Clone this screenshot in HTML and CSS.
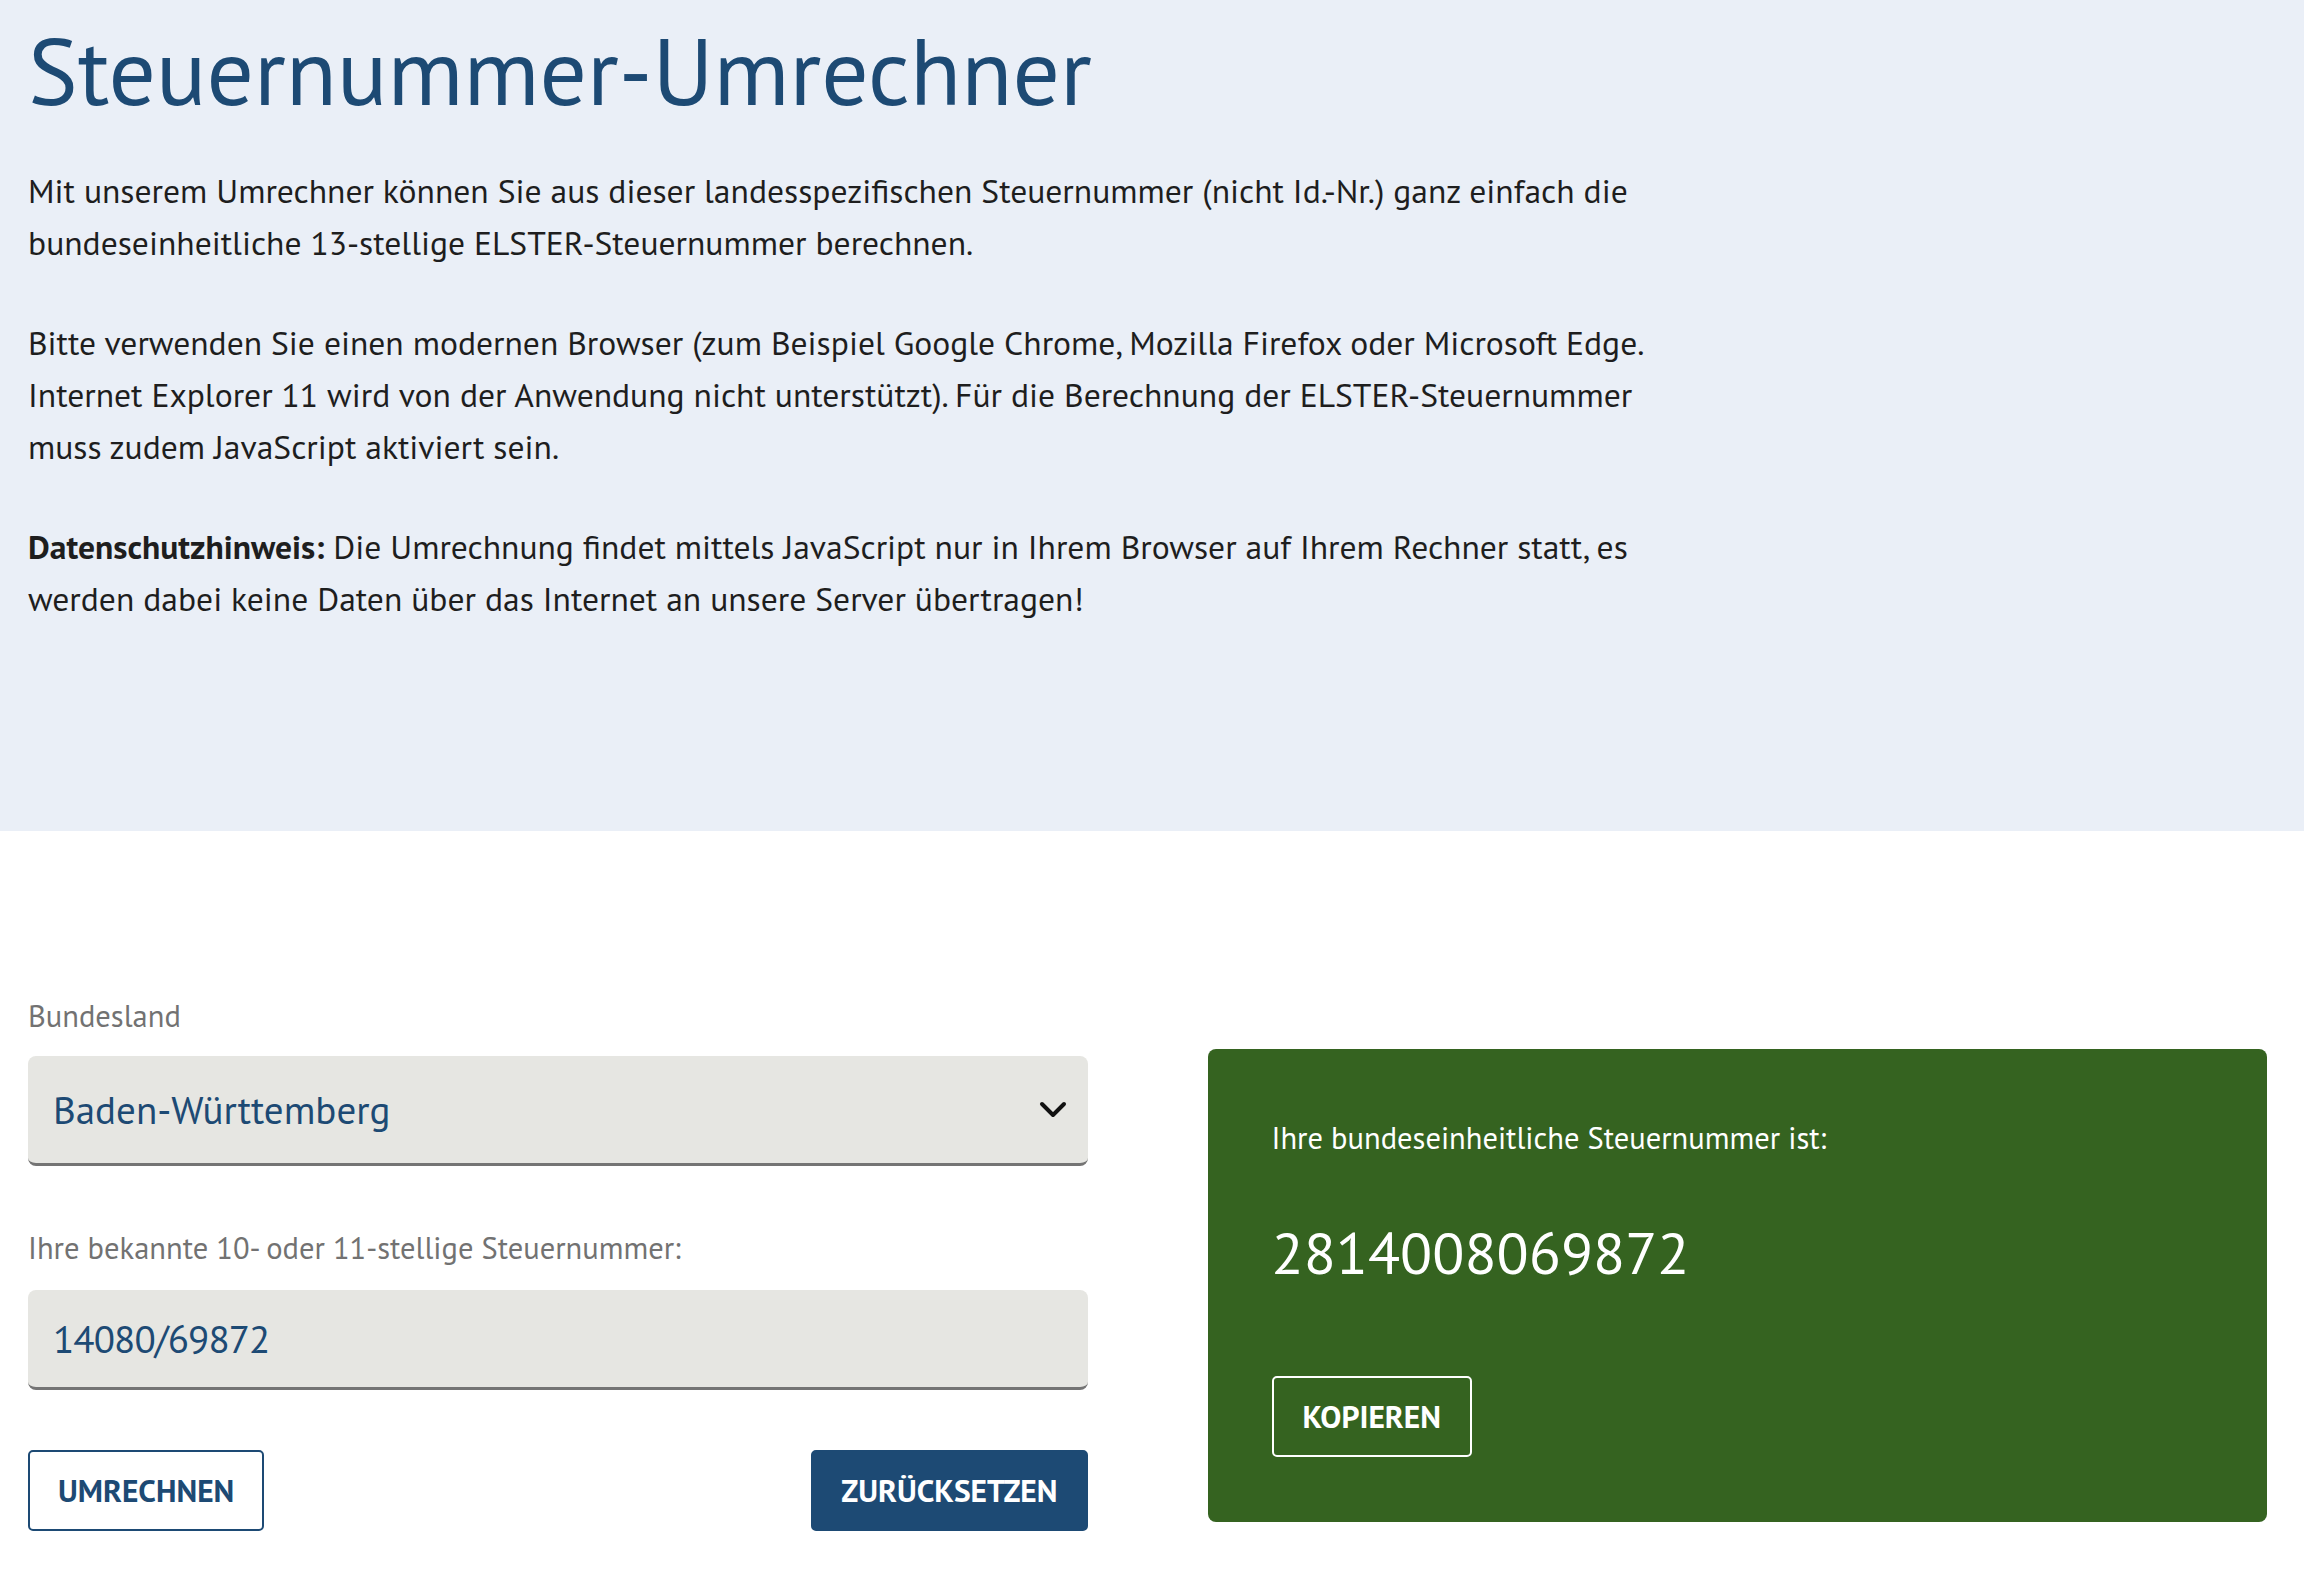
FILE: index.html
```html
<!DOCTYPE html>
<html lang="de">
<head>
    <meta charset="UTF-8">
    <meta name="viewport" content="width=device-width, initial-scale=1.0">
    <title>Steuernummer-Umrechner</title>
    <link rel="stylesheet" href="styles.css">
</head>
<body>
    <section class="intro">
        <h1>Steuernummer-Umrechner</h1>
        <p>Mit unserem Umrechner können Sie aus dieser landesspezifischen Steuernummer (nicht Id.-Nr.) ganz einfach die bundeseinheitliche 13-stellige ELSTER-Steuernummer berechnen.</p>
        <p>Bitte verwenden Sie einen modernen Browser (zum Beispiel Google Chrome, Mozilla Firefox oder Microsoft Edge. Internet Explorer 11 wird von der Anwendung nicht unterstützt). Für die Berechnung der ELSTER-Steuernummer muss zudem JavaScript aktiviert sein.</p>
        <p><strong>Datenschutzhinweis:</strong> Die Umrechnung findet mittels JavaScript nur in Ihrem Browser auf Ihrem Rechner statt, es werden dabei keine Daten über das Internet an unsere Server übertragen!</p>
    </section>

    <section class="converter">
        <form class="converter-form" onsubmit="return false;">
            <label class="field-label" for="land">Bundesland</label>
            <div class="select-wrap">
                <select id="land" class="field">
                    <option selected>Baden-Württemberg</option>
                    <option>Bayern</option>
                    <option>Berlin</option>
                    <option>Brandenburg</option>
                    <option>Bremen</option>
                    <option>Hamburg</option>
                    <option>Hessen</option>
                    <option>Mecklenburg-Vorpommern</option>
                    <option>Niedersachsen</option>
                    <option>Nordrhein-Westfalen</option>
                    <option>Rheinland-Pfalz</option>
                    <option>Saarland</option>
                    <option>Sachsen</option>
                    <option>Sachsen-Anhalt</option>
                    <option>Schleswig-Holstein</option>
                    <option>Thüringen</option>
                </select>
                <svg class="chevron" width="28" height="18" viewBox="0 0 28 18">
                    <path d="M3 3 L14 14 L25 3" fill="none" stroke="#111" stroke-width="4" stroke-linecap="round" stroke-linejoin="round"/>
                </svg>
            </div>

            <label class="field-label" for="stnr">Ihre bekannte 10- oder 11-stellige Steuernummer:</label>
            <input id="stnr" class="field" type="text" value="14080/69872">

            <div class="actions">
                <button class="btn btn-outline" type="button">Umrechnen</button>
                <button class="btn btn-solid" type="reset">Zurücksetzen</button>
            </div>
        </form>

        <div class="result">
            <div class="result-label">Ihre bundeseinheitliche Steuernummer ist:</div>
            <div class="result-number" id="result">2814008069872</div>
            <button class="btn btn-light" type="button">Kopieren</button>
        </div>
    </section>
</body>
</html>
```
FILE: styles.css
```css
body {
    margin: 0;
    font-family: "PT Sans", "Open Sans", sans-serif;
    color: #1e1e1e;
    background: #fff;
}
.intro {
    background-color: #eaeff7;
    padding: 15px 37px 206px 28px;
}
.intro h1 {
    margin: 0 0 38px;
    font-size: 93.6px;
    line-height: 112px;
    font-weight: normal;
    color: #1d4a74;
}
.intro p {
    max-width: 1660px;
    margin: 0 0 48px;
    font-size: 33.6px;
    line-height: 52px;
}
.intro p:last-child {
    margin-bottom: 0;
}
.converter {
    display: grid;
    grid-template-columns: 1fr 1fr;
    column-gap: 120px;
    align-items: start;
    padding: 163px 37px 40px 28px;
}
.field-label {
    display: block;
    font-size: 30.5px;
    line-height: 44px;
    color: #727272;
    margin-bottom: 18px;
}
.select-wrap {
    position: relative;
    margin-bottom: 60px;
}
.field {
    display: block;
    width: 100%;
    box-sizing: border-box;
    margin: 0;
    border: none;
    border-bottom: 3px solid #747474;
    border-radius: 8px;
    background-color: #e6e6e2;
    font-family: inherit;
    font-size: 39px;
    color: #1d4a74;
    padding: 0 25px;
    outline: none;
}
select.field {
    height: 110px;
    appearance: none;
    -webkit-appearance: none;
}
input.field {
    height: 100px;
    margin-top: 20px;
    margin-bottom: 60px;
    letter-spacing: -0.9px;
}
.chevron {
    position: absolute;
    right: 21px;
    top: 45px;
    pointer-events: none;
}
.actions {
    display: flex;
    justify-content: space-between;
}
.btn {
    height: 81px;
    box-sizing: border-box;
    padding: 0 28px;
    border: 2px solid #1d4a74;
    border-radius: 5px;
    font-family: inherit;
    font-size: 31.5px;
    font-weight: bold;
    text-transform: uppercase;
    cursor: pointer;
}
.btn-outline {
    background: #fff;
    color: #1d4a74;
}
.btn-solid {
    background: #1d4a74;
    color: #fff;
}
.result {
    margin-top: 55px;
    background-color: #356320;
    border-radius: 8px;
    color: #fff;
    padding: 67px 64px 65px;
}
.result-label {
    font-size: 30.5px;
    line-height: 44px;
}
.result-number {
    margin: 57px 0 89px;
    font-size: 59px;
    line-height: 70px;
}
.btn-light {
    display: block;
    background: transparent;
    border-color: #fff;
    color: #fff;
    padding: 0 29px;
}
```
